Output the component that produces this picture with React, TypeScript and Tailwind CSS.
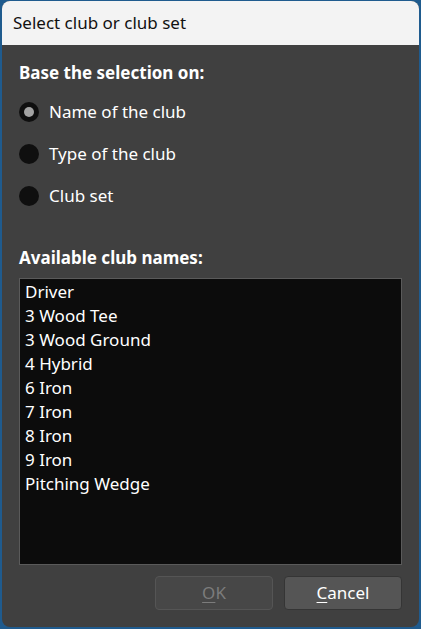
import React, { useState } from 'react';

const CLUBS = ['Driver', '3 Wood Tee', '3 Wood Ground', '4 Hybrid', '6 Iron', '7 Iron', '8 Iron', '9 Iron', 'Pitching Wedge'];
const OPTIONS = ['Name of the club', 'Type of the club', 'Club set'];

const Radio: React.FC<{ label: string; checked: boolean; onClick: () => void }> = ({ label, checked, onClick }) => (
  <button onClick={onClick} className="flex items-center h-[42px] text-left">
    <span className="w-[20px] h-[20px] rounded-full bg-[#0f0f0f] flex items-center justify-center">
      {checked && <span className="w-[10px] h-[10px] rounded-full bg-[#a3a3a3]"></span>}
    </span>
    <span className="ml-[10px] text-[17px] text-white">{label}</span>
  </button>
);

export default function App() {
  const [mode, setMode] = useState(0);

  return (
    <div className="w-[421px] h-[629px] bg-[#1f5b8e] p-[1px] pl-[2px] pr-[2px] pb-[2px]" style={{ fontFamily: '"Noto Sans", "Segoe UI", sans-serif' }}>
      <div className="w-full h-full rounded-[8px] overflow-hidden flex flex-col bg-[#404040]">
        <div className="h-[44px] bg-[#f3f3f3] flex items-center pl-[11px] text-[17px] text-[#111]">Select club or club set</div>

        <div className="flex-1 flex flex-col px-[17px]">
          <p className="mt-[18px] text-[17px] font-bold text-white leading-[20px]">Base the selection on:</p>
          <div className="mt-[8px] flex flex-col">
            {OPTIONS.map((o, i) => (
              <Radio key={o} label={o} checked={mode === i} onClick={() => setMode(i)} />
            ))}
          </div>

          <p className="mt-[31px] text-[17px] font-bold text-white leading-[20px]">Available club names:</p>
          <div className="mt-[10px] h-[287px] bg-[#0c0c0c] border border-[#5a5a5a] pt-[1px] px-[5px]">
            {CLUBS.map(c => (
              <div key={c} className="h-[24px] leading-[24px] text-[17px] text-white">{c}</div>
            ))}
          </div>

          <div className="mt-[11px] flex justify-end gap-[11px]">
            <button disabled className="w-[118px] h-[34px] rounded-[4px] bg-[#474747] border border-[#555555] text-[17px] text-[#7c7c7c]">
              <span className="underline underline-offset-[3px]">O</span>K
            </button>
            <button className="w-[118px] h-[34px] rounded-[4px] bg-[#555555] border border-[#353535] text-[17px] text-white">
              <span className="underline underline-offset-[3px]">C</span>ancel
            </button>
          </div>
        </div>
      </div>
    </div>
  );
}
